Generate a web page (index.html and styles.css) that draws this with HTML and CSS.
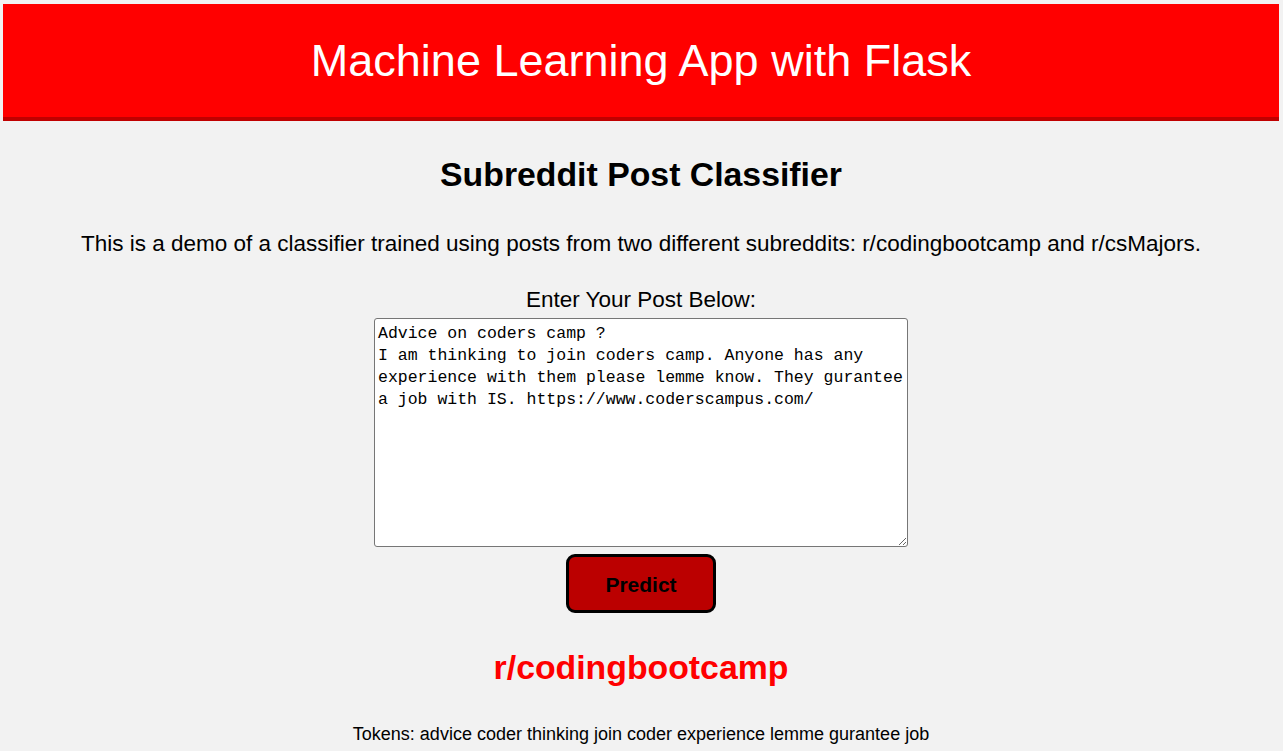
FILE: index.html
```html
<!DOCTYPE html>
<html lang="en">
<head>
<meta charset="utf-8">
<title>Machine Learning App with Flask</title>
<link rel="stylesheet" href="styles.css">
</head>
<body>
<header class="topbar">
  <h1 class="topbar-title">Machine Learning App with Flask</h1>
</header>
<main class="content">
  <h2 class="page-title">Subreddit Post Classifier</h2>
  <p class="intro">This is a demo of a classifier trained using posts from two different subreddits: r/codingbootcamp and r/csMajors.</p>
  <form class="post-form">
    <label class="post-label" for="post">Enter Your Post Below:</label>
    <textarea class="post-input" id="post" spellcheck="true">Advice on coders camp ?
I am thinking to join coders camp. Anyone has any experience with them please lemme know. They gurantee a job with IS. https://www.coderscampus.com/</textarea>
    <button class="predict-btn" type="button">Predict</button>
  </form>
  <div class="result">r/codingbootcamp</div>
  <div class="tokens">Tokens: advice coder thinking join coder experience lemme gurantee job</div>
</main>
</body>
</html>
```
FILE: styles.css
```css
html, body {
  background: #f2f2f2;
}
body {
  margin: 4px 4px 0 3px;
  font-family: "Liberation Sans", Arial, sans-serif;
  color: #000;
}
.topbar {
  background: #ff0000;
  border-bottom: 4px solid #c00000;
  height: 113px;
  display: flex;
  align-items: center;
  justify-content: center;
}
.topbar-title {
  margin: 0;
  color: #fff;
  font-weight: normal;
  font-size: 45px;
  line-height: 113px;
}
.content {
  display: flex;
  flex-direction: column;
  align-items: center;
  text-align: center;
}
.page-title {
  margin: 35px 0 0;
  font-size: 33.8px;
  line-height: 36px;
  font-weight: bold;
}
.intro {
  margin: 40px 0 0;
  font-size: 22.5px;
  line-height: 24px;
}
.post-form {
  display: flex;
  flex-direction: column;
  align-items: center;
  margin-top: 32px;
}
.post-label {
  font-size: 22.5px;
  line-height: 24px;
}
.post-input {
  box-sizing: border-box;
  margin-top: 6px;
  width: 534px;
  height: 229px;
  padding: 4px 2px 2px 3px;
  border: 1px solid #767676;
  border-radius: 3px;
  background: #fff;
  font-family: "Liberation Mono", "DejaVu Sans Mono", monospace;
  font-size: 16.5px;
  line-height: 22px;
  color: #000;
  resize: both;
}
.predict-btn {
  box-sizing: border-box;
  margin-top: 7px;
  width: 150px;
  height: 59px;
  padding: 2px 0 0;
  background: #bb0000;
  border: 3px solid #000;
  border-radius: 9px;
  font-family: "Liberation Sans", Arial, sans-serif;
  font-weight: bold;
  font-size: 21px;
  color: #000;
}
.result {
  margin-top: 35px;
  font-size: 33.8px;
  line-height: 38px;
  font-weight: bold;
  color: #ff0000;
}
.tokens {
  margin-top: 37px;
  font-size: 18px;
  line-height: 22px;
}
```
